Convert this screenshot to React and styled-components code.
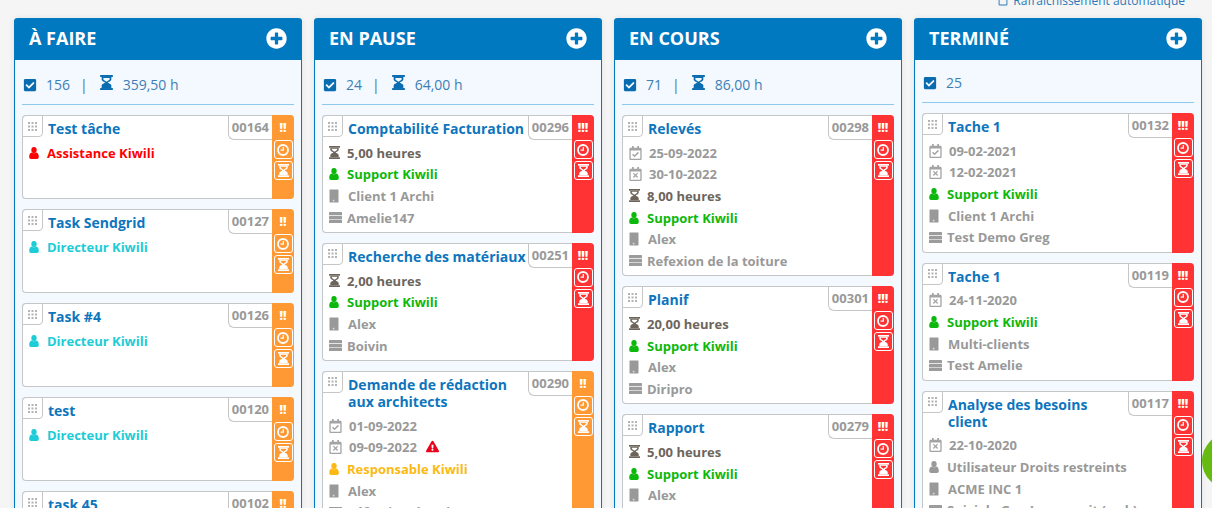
import React from "react";
import styled, { createGlobalStyle } from "styled-components";
import { FaCheckSquare, FaPlusCircle, FaRegCalendarCheck, FaRegCalendarTimes, FaExclamationTriangle, FaRegSquare } from "react-icons/fa";

const Global = createGlobalStyle`
  html, body { margin: 0; padding: 0; height: 508px; overflow: hidden; background: #f5f5f5; }
  body { font-family: "Open Sans", "Liberation Sans", sans-serif; }
  * { box-sizing: border-box; }
`;

const Page = styled.div`
  position: relative;
  width: 1212px;
  height: 508px;
  overflow: hidden;
`;
const TopBar = styled.div`
  margin-top: -9px;
  height: 27px;
  display: flex;
  justify-content: flex-end;
  align-items: flex-start;
  padding: 1px 27px 0 0;
  color: #2a7ab8;
  font-size: 12px;
  line-height: 18px;
`;
const Refresh = styled.span`
  display: flex;
  align-items: center;
  gap: 5px;
  svg { width: 10px; height: 10px; }
`;
const Board = styled.div`
  display: grid;
  grid-template-columns: repeat(4, 288px);
  gap: 12px;
  padding-left: 14px;
`;
const Column = styled.section`
  background: #f4f8ff;
  border: 1px solid #0079c1;
  border-top: 0;
  border-radius: 4px 4px 0 0;
  box-shadow: 0 0 6px rgba(0,0,0,0.08);
  height: 600px;
`;
const Head = styled.header`
  height: 42px;
  margin: 0 -1px;
  background: #0079c1;
  border-radius: 4px 4px 0 0;
  color: #fff;
  display: flex;
  align-items: center;
  justify-content: space-between;
  padding: 0 15px 3px 15px;
  font-size: 18px;
  font-weight: 700;
  svg { width: 21px; height: 21px; margin-top: 1px; }
`;
const Stats = styled.div`
  margin: 0 7px;
  height: ${p => p.$short ? 43 : 45}px;
  padding-top: ${p => p.$short ? 3 : 5}px;
  border-bottom: 1px solid #8fcaec;
  display: flex;
  align-items: center;
  color: #3d7fb5;
  font-size: 14px;
  svg { color: #0a6cb0; }
`;
const Check = styled(FaCheckSquare)`
  width: 14px;
  height: 14px;
  margin: 0 9px 0 1px;
`;
const Sep = styled.span`
  margin: 0 12px 0 10px;
  color: #4a6f8f;
`;
const GlassWrap = styled.span`
  display: flex;
  margin: -5px 10px 0 0;
`;
const Cards = styled.div`
  display: flex;
  flex-direction: column;
  gap: 10px;
  padding: 10px 7px 0;
`;
const Card = styled.article`
  display: flex;
  min-height: 84px;
  background: #fff;
  border: 1px solid #c6c6c6;
  border-right: 0;
  border-radius: 4px;
`;
const Body = styled.div`
  flex: 1;
  min-width: 0;
  padding-bottom: 3.6px;
`;
const TitleRow = styled.div`
  display: flex;
  align-items: flex-start;
`;
const Grip = styled.div`
  flex: none;
  width: 21px;
  height: 22px;
  margin: -1px 0 0 -1px;
  border: 1px solid #c6c6c6;
  border-radius: 4px 0 4px 0;
  display: flex;
  align-items: center;
  justify-content: center;
  background: #fff;
`;
const Title = styled.h3`
  flex: 1;
  min-width: 0;
  margin: 0;
  padding: 4px 0 5px 5px;
  color: #0d75bd;
  font-size: 14px;
  line-height: 17px;
  font-weight: 700;
`;
const Code = styled.div`
  flex: none;
  height: 25px;
  margin-top: -1px;
  padding: 0 3px;
  border: 1px solid #c6c6c6;
  border-top: 0;
  border-right: 0;
  border-radius: 0 0 0 6px;
  color: #999;
  font-size: 13px;
  line-height: 25px;
  font-weight: 700;
`;
const Row = styled.div`
  display: flex;
  align-items: center;
  height: 21.6px;
  padding-left: 6px;
  color: ${p => p.$color || "#999"};
  font-size: 13px;
  font-weight: 700;
  white-space: nowrap;
  svg { flex: none; margin-right: ${p => p.$gap || 7}px; }
`;
const RowCal = styled.span`
  display: flex;
  color: #a4a4a4;
  svg { width: 13px; height: 14px; }
`;
const Alert = styled(FaExclamationTriangle)`
  && { width: 13px; height: 13px; margin: -1px 0 0 9px; color: #e9001b; }
`;
const Side = styled.aside`
  flex: none;
  width: 22px;
  margin: -1px 0;
  background: ${p => p.$color};
  border-radius: 0 4px 4px 0;
  color: #fff;
  display: flex;
  flex-direction: column;
  align-items: center;
  gap: 2px;
`;
const Bang = styled.div`
  height: 23px;
  line-height: 25px;
  font-size: 12px;
  font-weight: 800;
`;
const SideBtn = styled.div`
  width: 19px;
  height: 19px;
  border: 1px solid #fff;
  border-radius: 3px;
  display: flex;
  align-items: center;
  justify-content: center;
`;
const Blob = styled.div`
  position: absolute;
  left: 1202px;
  top: 433px;
  width: 56px;
  height: 56px;
  border-radius: 50%;
  background: #66bb11;
`;

const GripDots = () => (
  <svg width="9" height="9" viewBox="0 0 9 9" fill="#b4b4b4">
    {[0, 3.5, 7].flatMap(y => [0, 3.5, 7].map(x => <rect key={x + "-" + y} x={x} y={y} width="2" height="2" />))}
  </svg>
);
const ClockIcon = () => (
  <svg width="12" height="12" viewBox="0 0 12 12" fill="none" stroke="#fff">
    <circle cx="6" cy="6" r="5" strokeWidth="1.8" />
    <path d="M6.3 3v3.2H3.6" strokeWidth="1.2" />
  </svg>
);
const HourglassIcon = ({ w = 11, h = 13 }) => (
  <svg width={w} height={h} viewBox="0 0 11 13" fill="currentColor">
    <rect width="11" height="1.7" />
    <rect y="11.3" width="11" height="1.7" />
    <path
      fillRule="evenodd"
      d="M1.3 1.7V3.8C1.3 5.3 3.8 5.8 4.4 6.5C3.8 7.2 1.3 7.7 1.3 9.2V11.3H9.7V9.2C9.7 7.7 7.2 7.2 6.6 6.5C7.2 5.8 9.7 5.3 9.7 3.8V1.7ZM2.8 2.7H8.2V3.6C8.2 4.5 6.1 5 5.5 5.8C4.9 5 2.8 4.5 2.8 3.6Z"
    />
  </svg>
);
const UserIcon = () => (
  <svg width="10" height="12" viewBox="0 0 10 12" fill="currentColor">
    <ellipse cx="5" cy="3.1" rx="2.7" ry="3.1" />
    <path d="M2.6 5.6 C3.4 6.6 6.6 6.6 7.4 5.6 C9 6.1 9.8 7.6 9.8 10 C9.8 11.3 9 12 8 12 H2 C1 12 .2 11.3 .2 10 C.2 7.6 1 6.1 2.6 5.6Z" />
  </svg>
);
const ClientIcon = () => (
  <svg width="10" height="14" viewBox="0 0 10 14">
    <rect x="0.5" y="0.5" width="9" height="13" rx="0.5" fill="#999" />
    <rect x="3.8" y="10.8" width="1.6" height="1.6" fill="#ddd" />
  </svg>
);
const ProjectIcon = () => (
  <svg width="13" height="11" viewBox="0 0 13 11" fill="#9c9c9c">
    <rect y="0" width="13" height="3.3" rx="0.5" />
    <rect y="3.9" width="13" height="3.3" rx="0.5" />
    <rect y="7.8" width="13" height="3.2" rx="0.5" />
  </svg>
);

const GREEN = "#0cb80c", CYAN = "#1cccd6", AMBER = "#fdb913", RED = "#f00", DARK = "#6d655c";
const ORANGE = "#ff9933", CRIMSON = "#ff3333";

const rowOf = r => {
  const [k, t, c] = r;
  if (k === "start") return <Row key={t + k} $gap={7}><RowCal><FaRegCalendarCheck /></RowCal>{t}</Row>;
  if (k === "end") return <Row key={t + k} $gap={7}><RowCal><FaRegCalendarTimes /></RowCal>{t}{c && <Alert />}</Row>;
  if (k === "hours") return <Row key={t} $color={DARK} $gap={7}><HourglassIcon />{t}</Row>;
  if (k === "user") return <Row key={t} $color={c} $gap={8}><UserIcon />{t}</Row>;
  if (k === "client") return <Row key={t} $gap={9}><ClientIcon />{t}</Row>;
  return <Row key={t} $gap={5}><ProjectIcon />{t}</Row>;
};

const columns = [
  { name: "À FAIRE", count: "156", hours: "359,50 h", cards: [
    { title: "Test tâche", code: "00164", rows: [["user", "Assistance Kiwili", RED]] },
    { title: "Task Sendgrid", code: "00127", rows: [["user", "Directeur Kiwili", CYAN]] },
    { title: "Task #4", code: "00126", rows: [["user", "Directeur Kiwili", CYAN]] },
    { title: "test", code: "00120", rows: [["user", "Directeur Kiwili", CYAN]] },
    { title: "task 45", code: "00102", rows: [] },
  ]},
  { name: "EN PAUSE", count: "24", hours: "64,00 h", cards: [
    { title: "Comptabilité Facturation", code: "00296", high: 1, rows: [["hours", "5,00 heures"], ["user", "Support Kiwili", GREEN], ["client", "Client 1 Archi"], ["project", "Amelie147"]] },
    { title: "Recherche des matériaux", code: "00251", high: 1, rows: [["hours", "2,00 heures"], ["user", "Support Kiwili", GREEN], ["client", "Alex"], ["project", "Boivin"]] },
    { title: "Demande de rédaction aux architects", code: "00290", rows: [["start", "01-09-2022"], ["end", "09-09-2022", true], ["user", "Responsable Kiwili", AMBER], ["client", "Alex"], ["project", "Réfection des plans"]] },
  ]},
  { name: "EN COURS", count: "71", hours: "86,00 h", cards: [
    { title: "Relevés", code: "00298", high: 1, rows: [["start", "25-09-2022"], ["end", "30-10-2022"], ["hours", "8,00 heures"], ["user", "Support Kiwili", GREEN], ["client", "Alex"], ["project", "Refexion de la toiture"]] },
    { title: "Planif", code: "00301", high: 1, rows: [["hours", "20,00 heures"], ["user", "Support Kiwili", GREEN], ["client", "Alex"], ["project", "Diripro"]] },
    { title: "Rapport", code: "00279", high: 1, rows: [["hours", "5,00 heures"], ["user", "Support Kiwili", GREEN], ["client", "Alex"], ["project", "Boivin"]] },
  ]},
  { name: "TERMINÉ", count: "25", cards: [
    { title: "Tache 1", code: "00132", high: 1, rows: [["start", "09-02-2021"], ["end", "12-02-2021"], ["user", "Support Kiwili", GREEN], ["client", "Client 1 Archi"], ["project", "Test Demo Greg"]] },
    { title: "Tache 1", code: "00119", high: 1, rows: [["end", "24-11-2020"], ["user", "Support Kiwili", GREEN], ["client", "Multi-clients"], ["project", "Test Amelie"]] },
    { title: "Analyse des besoins client", code: "00117", high: 1, rows: [["end", "22-10-2020"], ["user", "Utilisateur Droits restreints", "#999"], ["client", "ACME INC 1"], ["project", "Suivi de Gen Inaugurait (web)"]] },
  ]},
];

export default function App() {
  return (
    <Page>
      <Global />
      <TopBar><Refresh><FaRegSquare />Rafraîchissement automatique</Refresh></TopBar>
      <Board>
        {columns.map(col => (
          <Column key={col.name}>
            <Head>{col.name}<FaPlusCircle /></Head>
            <Stats $short={!col.hours}>
              <Check /><span>{col.count}</span>
              {col.hours && <><Sep>|</Sep><GlassWrap><HourglassIcon w={13} h={15} /></GlassWrap><span>{col.hours}</span></>}
            </Stats>
            <Cards>
              {col.cards.map(card => (
                <Card key={card.code}>
                  <Body>
                    <TitleRow>
                      <Grip><GripDots /></Grip>
                      <Title>{card.title}</Title>
                      <Code>{card.code}</Code>
                    </TitleRow>
                    {card.rows.map(rowOf)}
                  </Body>
                  <Side $color={card.high ? CRIMSON : ORANGE}>
                    <Bang>{card.high ? "!!!" : "!!"}</Bang>
                    <SideBtn><ClockIcon /></SideBtn>
                    <SideBtn><HourglassIcon w={11} h={13} /></SideBtn>
                  </Side>
                </Card>
              ))}
            </Cards>
          </Column>
        ))}
      </Board>
      <Blob />
    </Page>
  );
}
